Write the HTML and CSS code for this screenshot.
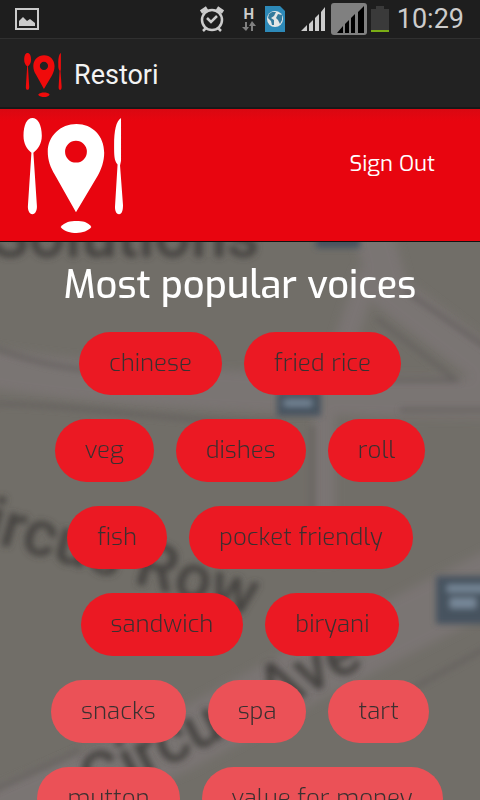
FILE: index.html
```html
<!DOCTYPE html>
<html lang="en">
<head>
    <meta charset="UTF-8">
    <meta name="viewport" content="width=device-width, initial-scale=1">
    <title>Restori</title>
    <link rel="stylesheet" href="styles.css">
</head>
<body>
    <!-- shared logo shape -->
    <svg class="defs" width="0" height="0" aria-hidden="true">
        <symbol id="logo" viewBox="0 0 102 116" preserveAspectRatio="none">
            <path d="M9.500 0C4 0 0.500 7 0.500 18C0.500 26 4 32 8.500 35L5 88C4.500 93 6.500 97 9.500 97S14.500 93 14 88L10.500 35C15 32 19 26 19 18C19 7 15 0 9.500 0Z"/>
            <path fill-rule="evenodd" d="M54 6C38 6 25 18 25 34C25 43 28 50 32 57L53.500 95L75 59C79 52 82 44 82 35C82 18 70 6 54 6ZM53.500 23A11 11 0 1 1 53.500 45A11 11 0 1 1 53.500 23Z"/>
            <path d="M99 0C94 3 92 13 92 27C92 38 92 43 95.500 47L93 88C92.500 93 94 97 97 97S101 93 101 88L98 48L99 43Z"/>
            <path d="M38 110C42 105 48 104 54 104S66 105 69 110C66 114 60 116 54 116S42 115 38 110Z"/>
        </symbol>
    </svg>
    <div class="app">
        <div class="statusBar">
            <svg class="notice" viewBox="0 0 24 22" aria-hidden="true">
                <rect x="1" y="1" width="22" height="20"/>
                <path d="M4 18V13L8 9L12 13L15 11L20 15V18Z"/>
            </svg>
            <div class="statusIcons">
                <svg width="24" height="26" viewBox="0 0 24 26" fill="none" stroke="#ccc" stroke-width="2.500" aria-hidden="true">
                    <circle cx="12" cy="14" r="10"/>
                    <path d="M7 12L11 16L17 10"/>
                    <path d="M1 6L7 2M23 6L17 2" stroke-width="4"/>
                    <path d="M6 22L3 25M18 22L21 25"/>
                </svg>
                <div class="network">
                    <span>H</span>
                    <svg width="14" height="11" viewBox="0 0 14 11" fill="#808080" aria-hidden="true">
                        <path d="M3 1H5V6H7L4 10L0 6H3ZM9 10H11V5H14L10 0L7 5H9Z"/>
                    </svg>
                </div>
                <svg class="globe" width="20" height="26" viewBox="0 0 20 26" aria-hidden="true">
                    <path fill="#2d89b8" d="M0 0H15L20 5V26H0Z"/>
                    <circle cx="10" cy="13" r="8" fill="#e4e6e6"/>
                    <path fill="#347a9c" d="M4 8L7 6L11 6L9 10L6 12L9 14L9 19L7 19L6 15L3 12ZM13 8L17 9L17 14L15 18L13 14L11 12Z"/>
                </svg>
                <svg class="signal" width="24" height="24" viewBox="0 0 24 24" fill="#ccc" aria-hidden="true">
                    <path d="M0 24L6 18V24ZM8 17L12 13V24H8ZM14 11L18 7V24H14ZM20 5L24 0V24H20Z"/>
                </svg>
                <svg class="simTwo" width="36" height="32" viewBox="0 0 36 32" aria-hidden="true">
                    <rect width="36" height="32" rx="3" fill="#808080"/>
                    <path d="M6 30L12 23V30ZM14 21L18 17V30H14ZM20 15L24 11V30H20ZM27 9L33 3V30H27Z"/>
                </svg>
                <svg class="battery" width="18" height="26" viewBox="0 0 18 26" aria-hidden="true">
                    <path fill="#3a3a3a" d="M5 0H13V3H18V24H0V3H5Z"/>
                    <path fill="#7aad15" d="M0 24H18V26H0Z"/>
                </svg>
                <time class="clock">10:29</time>
            </div>
        </div>
        <div class="actionBar">
            <svg class="appIcon" aria-hidden="true"><use href="#logo"/></svg>
            <h1>Restori</h1>
        </div>
        <header class="header">
            <svg class="headerLogo" role="img" aria-label="Restori"><use href="#logo"/></svg>
            <a href="#signout">Sign Out</a>
        </header>
        <main class="content">
            <svg class="map" viewBox="0 0 480 558" preserveAspectRatio="xMidYMin slice" aria-hidden="true">
                <defs>
                    <filter id="soft" x="-20%" y="-20%" width="140%" height="140%"><feGaussianBlur stdDeviation="3"/></filter>
                    <filter id="haze" x="-20%" y="-20%" width="140%" height="140%"><feGaussianBlur stdDeviation="5"/></filter>
                </defs>
                <rect width="480" height="558" fill="#716e68"/>
                <g filter="url(#haze)" fill="none" stroke="#7a7573">
                    <path d="M-20 124C80 142 250 154 500 156" stroke-width="40"/>
                    <path d="M370 -20L390 50L500 134" stroke-width="38"/>
                    <path d="M368 30L342 110L324 170V320" stroke-width="22"/>
                    <path d="M-20 584L180 500L310 430L500 334" stroke-width="58"/>
                </g>
                <g filter="url(#soft)" fill="none" stroke="#65615e" stroke-width="4">
                    <path d="M-10 104C30 120 60 126 90 128M-10 162C60 160 180 182 280 180"/>
                    <path d="M376 76L456 138H320M404 48L490 108M312 184V300M400 168H490"/>
                    <path d="M-10 550L80 508M410 448L490 404"/>
                </g>
                <g filter="url(#soft)">
                    <path fill="#46535f" d="M316 -8H360V6H316ZM277 150H321V174H277ZM436 334H490V382H436Z"/>
                    <path fill="#78899a" d="M284 158H312V164H284ZM447 343H490V350H447ZM450 356H476V366H450Z"/>
                </g>
                <g class="mapText" filter="url(#soft)">
                    <text x="-10" y="15">Solutions</text>
                    <text transform="translate(-58 286) rotate(16)">Circus Row</text>
                    <text transform="translate(94 562) rotate(-27)">Circus Ave</text>
                </g>
            </svg>
            <h2>Most popular voices</h2>
            <div class="voices">
                <button type="button" class="voice">chinese</button>
                <button type="button" class="voice">fried rice</button>
                <button type="button" class="voice">veg</button>
                <button type="button" class="voice">dishes</button>
                <button type="button" class="voice">roll</button>
                <button type="button" class="voice">fish</button>
                <button type="button" class="voice">pocket friendly</button>
                <button type="button" class="voice">sandwich</button>
                <button type="button" class="voice">biryani</button>
                <button type="button" class="voice light">snacks</button>
                <button type="button" class="voice light">spa</button>
                <button type="button" class="voice light">tart</button>
                <button type="button" class="voice light">mutton</button>
                <button type="button" class="voice light">value for money</button>
            </div>
        </main>
    </div>
</body>
</html>
```

FILE: styles.css
```css
* {
    box-sizing: border-box;
}

body {
    margin: 0;
    font-family: Exo, "Exo 2", Roboto, "Open Sans", sans-serif;
    background: #716e68;
}

.defs {
    position: absolute;
}

.app {
    display: flex;
    flex-direction: column;
    height: 100vh;
}

/* status bar */
.statusBar {
    display: flex;
    justify-content: space-between;
    align-items: center;
    height: 39px;
    flex-shrink: 0;
    padding: 0 16px 0 15px;
    background: #1e1e1e;
    border-bottom: 1px solid #303030;
}

.notice {
    width: 24px;
    height: 22px;
    fill: #ccc;
}

.notice rect {
    fill: none;
    stroke: #ccc;
    stroke-width: 2;
}

.statusIcons {
    display: flex;
    align-items: center;
}

.network {
    display: flex;
    flex-direction: column;
    align-items: center;
    width: 14px;
    margin-left: 18px;
    color: #ccc;
    font: bold 15px/14px Roboto, sans-serif;
}

.globe {
    margin-left: 9px;
}

.signal {
    margin-left: 16px;
}

.simTwo {
    margin-left: 6px;
}

.battery {
    margin-left: 4px;
}

.clock {
    margin-left: 8px;
    color: #ccc;
    font: 400 27px/36px Roboto, sans-serif;
}

/* action bar */
.actionBar {
    display: flex;
    align-items: center;
    gap: 12px;
    height: 70px;
    flex-shrink: 0;
    padding: 4px 24px 0;
    background: #222;
    border-bottom: 2px solid #181818;
}

.appIcon {
    width: 38px;
    height: 44px;
    fill: #f00b0b;
}

.actionBar h1 {
    margin: 0;
    color: #f3f3f3;
    font: 400 27px/32px Roboto, sans-serif;
}

/* red header */
.header {
    display: flex;
    justify-content: space-between;
    align-items: flex-start;
    height: 133px;
    flex-shrink: 0;
    padding: 9px 45px 0 23px;
    background: linear-gradient(#d90812, #e8050f 12px);
    border-bottom: 1px solid #111;
}

.headerLogo {
    width: 101px;
    height: 115px;
    fill: #fff;
}

.header a {
    margin-top: 31px;
    color: #fff;
    font-size: 22px;
    line-height: 30px;
    text-decoration: none;
}

/* content */
.content {
    position: relative;
    flex: 1;
    min-height: 0;
    overflow-y: auto;
    scrollbar-width: none;
}

.map {
    position: absolute;
    top: 0;
    left: 0;
    width: 100%;
    height: 100%;
}

.mapText {
    font: 500 64px Roboto, sans-serif;
    fill: #45423f;
}

.content h2 {
    position: relative;
    margin: 17px 0 21px;
    color: #fff;
    font-size: 38px;
    font-weight: 500;
    line-height: 52px;
    text-align: center;
}

.voices {
    position: relative;
    display: flex;
    flex-wrap: wrap;
    justify-content: center;
    gap: 24px 22px;
    padding: 0 30px 24px;
}

.voice {
    height: 63px;
    padding: 0 30px 2px;
    border: 0;
    border-radius: 32px;
    background: #eb1923;
    color: #3b3030;
    font-family: inherit;
    font-size: 24px;
    font-weight: 300;
    font-variant-ligatures: none;
    white-space: nowrap;
}

.voice.light {
    background: #eb5157;
}
```
